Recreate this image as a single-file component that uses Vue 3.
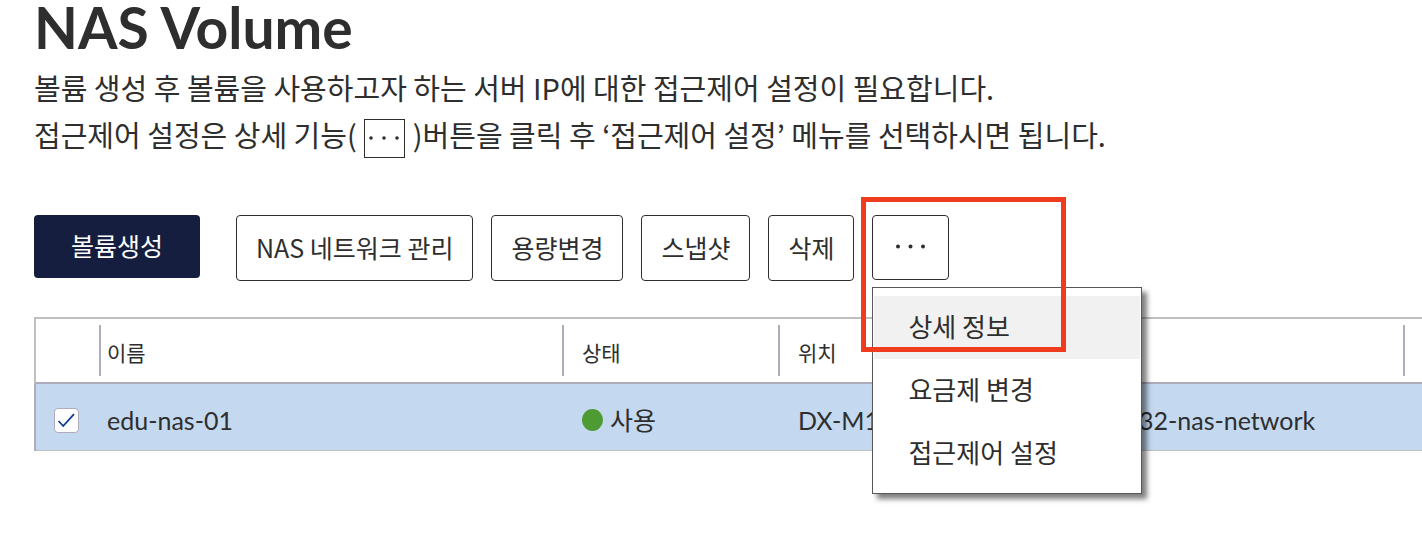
<script setup>
import { ref } from 'vue'

const actions = ['NAS 네트워크 관리', '용량변경', '스냅샷', '삭제']
const menuItems = ['상세 정보', '요금제 변경', '접근제어 설정']
const volumes = ref([
  { name: 'edu-nas-01', status: '사용', location: 'DX-M1', network: '32-nas-network', checked: true },
])
</script>

<template>
  <main class="page">
    <h1>NAS Volume</h1>
    <p class="description">
      볼륨 생성 후 볼륨을 사용하고자 하는 서버 IP에 대한 접근제어 설정이 필요합니다.<br />
      접근제어 설정은 상세 기능(
      <span class="inline-more"><svg viewBox="0 0 39 37" aria-hidden="true"><circle cx="6" cy="18" r="1.8" /><circle cx="19" cy="18" r="1.8" /><circle cx="32" cy="18" r="1.8" /></svg></span>
      )버튼을 클릭 후 ‘접근제어 설정’ 메뉴를 선택하시면 됩니다.
    </p>

    <div class="toolbar">
      <button type="button" class="btn primary">볼륨생성</button>
      <button v-for="action in actions" :key="action" type="button" class="btn">{{ action }}</button>
      <div class="more">
        <button type="button" class="btn more-btn" aria-label="상세 기능" aria-haspopup="menu" aria-expanded="true">
          <svg width="32" height="5" viewBox="0 0 32 5" aria-hidden="true"><circle cx="3" cy="2.5" r="2" /><circle cx="15.5" cy="2.5" r="2" /><circle cx="28" cy="2.5" r="2" /></svg>
        </button>
        <div class="menu" role="menu">
          <button v-for="(item, i) in menuItems" :key="item" type="button" role="menuitem" class="menu-item" :class="{ active: i === 0 }">{{ item }}</button>
        </div>
        <div class="highlight" aria-hidden="true"></div>
      </div>
    </div>

    <table>
      <colgroup>
        <col class="c-check" /><col class="c-name" /><col class="c-status" /><col class="c-location" /><col /><col class="c-end" />
      </colgroup>
      <thead>
        <tr>
          <th></th>
          <th class="name">이름</th>
          <th>상태</th>
          <th>위치</th>
          <th></th>
          <th></th>
        </tr>
      </thead>
      <tbody>
        <tr v-for="volume in volumes" :key="volume.name">
          <td class="check">
            <label class="checkbox">
              <input v-model="volume.checked" type="checkbox" :aria-label="volume.name" />
              <svg v-if="volume.checked" viewBox="0 0 25 25" aria-hidden="true"><path d="M4.6 13 9.2 18 20 6.2" /></svg>
            </label>
          </td>
          <td class="name">{{ volume.name }}</td>
          <td><span class="status"><span class="dot"></span>{{ volume.status }}</span></td>
          <td>{{ volume.location }}</td>
          <td>{{ volume.network }}</td>
          <td></td>
        </tr>
      </tbody>
    </table>
  </main>
</template>

<style>
body {
  background: #fff;
}
</style>

<style scoped>
.page {
  padding: 0 0 84px 34px;
  color: #2e2e2e;
  font-family: "Noto Sans CJK KR", sans-serif;
}
h1 {
  margin: 0;
  font: 700 57px/54px Lato, sans-serif;
}
.description {
  margin: 10px 0 0;
  font-size: 29px;
  line-height: 47px;
}
.inline-more {
  display: inline-flex;
  box-sizing: border-box;
  width: 41px;
  height: 39px;
  margin: 0 1px;
  border: 1px solid #2e2e2e;
  vertical-align: -10px;
}
svg {
  display: block;
  fill: #2e2e2e;
}
.inline-more svg {
  width: 39px;
  height: 37px;
}
.toolbar {
  display: flex;
  align-items: flex-start;
  gap: 18px;
  margin-top: 57px;
}
button {
  font: inherit;
  color: inherit;
  margin: 0;
}
.btn {
  padding: 0 19px 2px;
  border: 1px solid #2e2e2e;
  border-radius: 4px;
  background: #fff;
  font-size: 25px;
  line-height: 62px;
  white-space: nowrap;
}
.btn.primary {
  margin-right: 18px;
  padding: 0 37px 2px;
  border: 0;
  background: #151e3f;
  color: #fff;
  line-height: 61px;
}
.more {
  position: relative;
}
.more-btn {
  display: flex;
  align-items: center;
  justify-content: center;
  width: 77px;
  height: 65px;
}
.menu {
  position: absolute;
  z-index: 1;
  top: 72px;
  left: 0;
  box-sizing: border-box;
  width: 270px;
  padding: 8px 1px;
  border: 1px solid #58585a;
  background: #fff;
  box-shadow: 5px 5px 5px rgba(0, 0, 0, 0.5);
}
.menu-item {
  display: block;
  width: 100%;
  padding: 0 34px 4px;
  border: 0;
  background: transparent;
  font-size: 26px;
  line-height: 59px;
  text-align: left;
  white-space: nowrap;
}
.menu-item.active {
  background: #f1f1f1;
}
.highlight {
  position: absolute;
  z-index: 2;
  top: -18px;
  left: -11px;
  box-sizing: border-box;
  width: 205px;
  height: 155px;
  border: 5px solid #f03c1e;
  pointer-events: none;
}
table {
  width: 100%;
  margin-top: 36px;
  border-collapse: separate;
  border-spacing: 0;
  table-layout: fixed;
}
.c-check { width: 65px; }
.c-name { width: 463px; }
.c-status { width: 216px; }
.c-location { width: 341px; }
.c-end { width: 19px; }
th,
td {
  padding: 0 0 0 20px;
  text-align: left;
  white-space: nowrap;
}
th {
  height: 60px;
  padding-top: 3px;
  border-top: 2px solid #c0c0c0;
  border-bottom: 2px solid #adabbc;
  background: linear-gradient(#adabbc, #adabbc) left center / 2px 51px no-repeat;
  font-size: 21px;
  font-weight: 400;
  line-height: 60px;
}
th:first-child {
  border-left: 2px solid #c0c0c0;
  background: none;
}
th.name,
td.name {
  padding-left: 8px;
}
td {
  height: 67px;
  padding-top: 6px;
  box-sizing: border-box;
  border-bottom: 1px solid #c0c0c0;
  background: #c4d9f0;
  font-family: Lato, "Noto Sans CJK KR", sans-serif;
  font-size: 25px;
  line-height: 60px;
}
td:first-child {
  border-left: 2px solid #adabbc;
}
td.check {
  padding-left: 18px;
}
.checkbox {
  position: relative;
  display: block;
  width: 25px;
  height: 25px;
}
.checkbox input {
  display: block;
  appearance: none;
  box-sizing: border-box;
  width: 25px;
  height: 25px;
  margin: 0;
  border: 1px solid #adabbc;
  border-radius: 4px;
  background: #fff;
}
.checkbox svg {
  position: absolute;
  inset: 0;
  fill: none;
  stroke: #0f3a8c;
  stroke-width: 1.8;
  pointer-events: none;
}
.status {
  display: flex;
  align-items: center;
  gap: 7px;
}
.dot {
  width: 21px;
  height: 22px;
  border-radius: 50%;
  background: #4e9a33;
}
</style>
